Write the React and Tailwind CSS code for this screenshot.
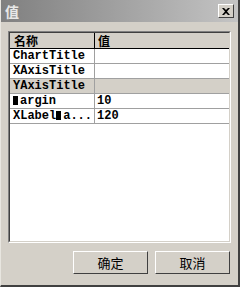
import React from "react";

const mono = { fontFamily: '"Liberation Mono", "DejaVu Sans Mono", monospace' };
const cjk = { fontFamily: '"Noto Sans CJK SC", "Liberation Sans", sans-serif' };

function Box() {
  return <span className="inline-block w-[5px] h-[9px] bg-black mr-[2px] align-[-1px]" />;
}

function Row({ name, value, gray }) {
  return (
    <div className={`flex h-[15px] border-b border-[#a0a0a0] ${gray ? "bg-[#d4d0c8]" : "bg-white"}`}>
      <div
        className="w-[85px] shrink-0 border-r border-[#a0a0a0] pl-[3px] text-[12px] font-bold leading-[14px] text-black overflow-hidden whitespace-nowrap"
        style={mono}
      >
        {name}
      </div>
      <div
        className="flex-1 pl-[2px] text-[12px] font-bold leading-[14px] text-black"
        style={mono}
      >
        {value}
      </div>
    </div>
  );
}

export default function App() {
  return (
    <div className="w-[240px] h-[287px] bg-[#d4d0c8] flex flex-col border-r-2 border-b-2 border-r-[#404040] border-b-[#404040] border-l border-l-[#e8e6e0] overflow-hidden">
      <div className="h-[22px] shrink-0 flex items-center justify-between pl-[4px] pr-[4px] bg-gradient-to-r from-[#808080] to-[#c4c4c4]">
        <span className="text-[14px] font-bold leading-none text-[#e8e8e8]" style={cjk}>
          值
        </span>
        <div className="w-[16px] h-[14px] bg-[#d4d0c8] border border-t-white border-l-white border-r-[#404040] border-b-[#404040] flex items-center justify-center">
          <svg width="8" height="7" viewBox="0 0 8 7">
            <path d="M0 0h2l2 2 2-2h2L5 3.5 8 7H6L4 5 2 7H0l3-3.5z" fill="black" />
          </svg>
        </div>
      </div>
      <div className="flex-1 flex flex-col px-[7px] pt-[9px] pb-[9px]">
        <div className="h-[212px] shrink-0 border border-t-[#808080] border-l-[#808080] border-r-white border-b-white">
          <div className="h-full border border-t-[#404040] border-l-[#404040] border-r-[#d4d0c8] border-b-[#d4d0c8] bg-white flex flex-col">
            <div className="flex h-[16px] bg-[#d4d0c8] border-b border-black">
              <div className="w-[85px] shrink-0 border-r border-black pl-[4px] text-[12px] font-bold leading-[15px] text-black" style={cjk}>
                名称
              </div>
              <div className="flex-1 pl-[3px] text-[12px] font-bold leading-[15px] text-black" style={cjk}>
                值
              </div>
            </div>
            <Row name="ChartTitle" value="" />
            <Row name="XAxisTitle" value="" />
            <Row name="YAxisTitle" value="" gray />
            <Row name={<><Box />argin</>} value="10" />
            <Row name={<>XLabel<Box />a...</>} value="120" />
          </div>
        </div>
        <div className="flex justify-end gap-[7px] mt-[8px] pr-[1px]">
          <button className="w-[75px] h-[23px] bg-[#d4d0c8] border border-t-white border-l-white border-r-[#404040] border-b-[#404040] text-[13px] text-black leading-none" style={cjk}>
            确定
          </button>
          <button className="w-[75px] h-[23px] bg-[#d4d0c8] border border-t-white border-l-white border-r-[#404040] border-b-[#404040] text-[13px] text-black leading-none" style={cjk}>
            取消
          </button>
        </div>
      </div>
    </div>
  );
}
